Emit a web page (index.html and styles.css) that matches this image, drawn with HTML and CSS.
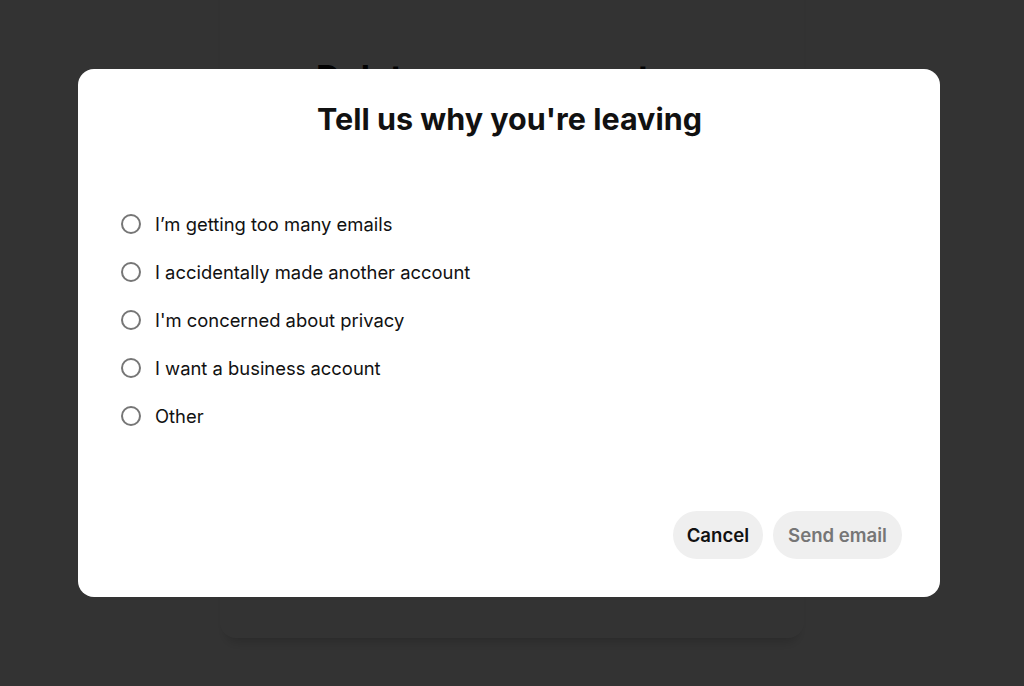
FILE: index.html
```html
<!DOCTYPE html>
<html lang="en">
<head>
<meta charset="utf-8">
<title>Tell us why you're leaving</title>
<link rel="stylesheet" href="styles.css">
</head>
<body>
<div class="page">
  <div class="card">
    <h1 class="card-title">Delete your account</h1>
  </div>
</div>
<div class="overlay">
  <div class="modal" role="dialog" aria-labelledby="modal-title">
    <h2 class="modal-title" id="modal-title">Tell us why you're leaving</h2>
    <div class="options">
      <label class="option"><span class="radio"></span><span class="option-text">I’m getting too many emails</span></label>
      <label class="option"><span class="radio"></span><span class="option-text">I accidentally made another account</span></label>
      <label class="option"><span class="radio"></span><span class="option-text">I'm concerned about privacy</span></label>
      <label class="option"><span class="radio"></span><span class="option-text">I want a business account</span></label>
      <label class="option"><span class="radio"></span><span class="option-text">Other</span></label>
    </div>
    <div class="footer">
      <button class="btn btn-cancel">Cancel</button>
      <button class="btn btn-send">Send email</button>
    </div>
  </div>
</div>
</body>
</html>
```
FILE: styles.css
```css
* { box-sizing: border-box; }
html, body {
  margin: 0;
  padding: 0;
  height: 100%;
}
body {
  background: #ffffff;
  font-family: Inter, "Liberation Sans", Arial, sans-serif;
  color: #111111;
  overflow: hidden;
}
.page {
  display: flex;
  justify-content: center;
}
.card {
  width: 584px;
  height: 738px;
  margin-top: -100px;
  border-radius: 16px;
  background: #ffffff;
  box-shadow: 0 10px 12px -6px rgba(0, 0, 0, 0.18), 0 0 2px rgba(0, 0, 0, 0.04);
  padding-top: 158px;
  padding-left: 96px;
}
.card-title {
  margin: 0;
  font-size: 34px;
  line-height: 40px;
  font-weight: 700;
  color: #111;
}
.overlay {
  position: fixed;
  inset: 0;
  background: rgba(0, 0, 0, 0.8);
  display: flex;
  align-items: flex-start;
  padding: 69px 0 0 78px;
}
.modal {
  width: 862px;
  height: 528px;
  background: #ffffff;
  border-radius: 16px;
  display: flex;
  flex-direction: column;
  padding: 31px 38px 38px 43px;
}
.modal-title {
  margin: 0 4px 0 0;
  text-align: center;
  font-size: 30.5px;
  line-height: 38px;
  font-weight: 700;
  color: #111111;
}
.options {
  margin-top: 62px;
  display: flex;
  flex-direction: column;
}
.option {
  display: flex;
  align-items: center;
  height: 48px;
  gap: 14px;
}
.radio {
  width: 20px;
  height: 20px;
  border: 2px solid #767676;
  border-radius: 50%;
  flex: none;
}
.option-text {
  font-size: 18.4px;
  color: #111111;
}
.footer {
  margin-top: auto;
  display: flex;
  justify-content: flex-end;
  gap: 10px;
}
.btn {
  height: 48px;
  border: none;
  border-radius: 24px;
  background: #efefef;
  font-family: inherit;
  font-size: 18.6px;
  font-weight: 600;
  padding: 0 15px;
}
.btn-cancel { color: #111111; padding: 0 14px; }
.btn-send { color: #767676; }
```
